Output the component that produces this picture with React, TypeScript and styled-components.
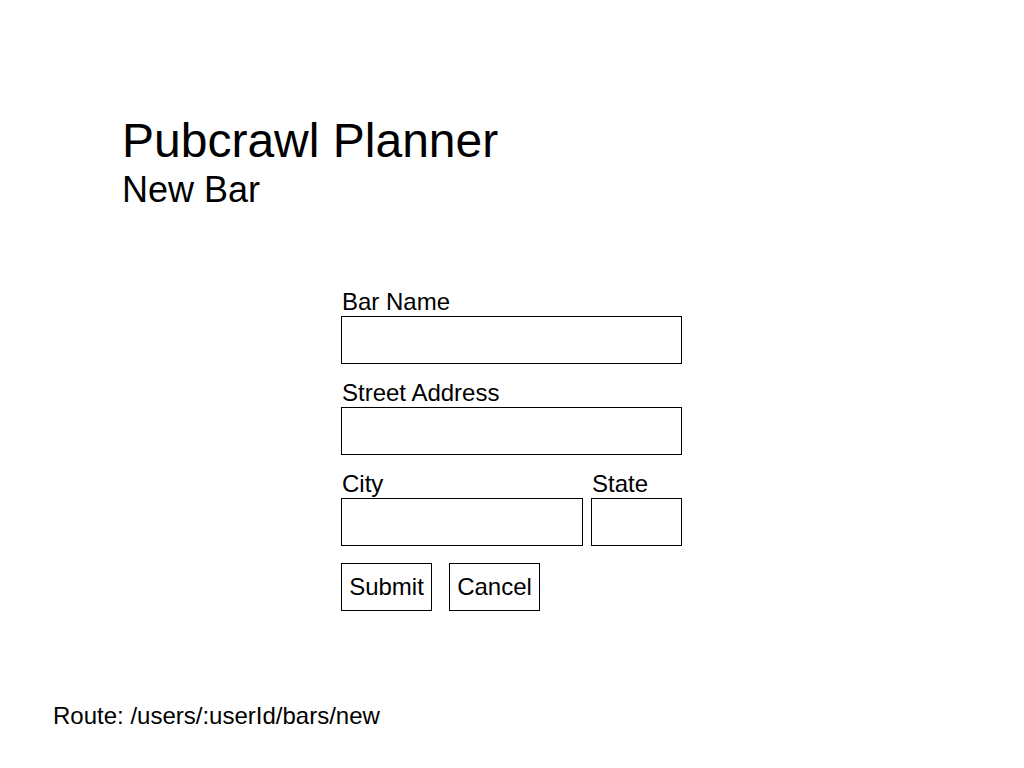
import React from "react";
import styled, { createGlobalStyle } from "styled-components";

const Global = createGlobalStyle`
  html, body { margin: 0; padding: 0; background: #fff; }
  body { font-family: "Liberation Sans", Arial, sans-serif; color: #000; }
  * { box-sizing: border-box; }
`;

const Page = styled.div`
  width: 1024px;
  height: 768px;
  display: flex;
  flex-direction: column;
  position: relative;
`;

const Header = styled.header`
  padding: 117px 0 0 122px;
`;

const Title = styled.h1`
  margin: 0;
  font-size: 48px;
  line-height: 48px;
  font-weight: 400;
`;

const Subtitle = styled.h2`
  margin: 7px 0 0;
  font-size: 36px;
  line-height: 36px;
  font-weight: 400;
`;

const Form = styled.form`
  margin: 82px 0 0 341px;
  width: 341px;
  display: flex;
  flex-direction: column;
  gap: 17px;
`;

const Field = styled.div<{ $w?: number }>`
  display: flex;
  flex-direction: column;
  gap: 2px;
  width: ${(p) => (p.$w ? `${p.$w}px` : "100%")};
`;

const Label = styled.label`
  font-size: 24px;
  line-height: 24px;
  padding-left: 1px;
`;

const Input = styled.input`
  height: 48px;
  width: 100%;
  border: 1px solid #000;
  border-radius: 0;
  background: #fff;
  font: inherit;
  outline: none;
`;

const Row = styled.div<{ $gap: number }>`
  display: flex;
  gap: ${(p) => p.$gap}px;
`;

const Button = styled.button`
  width: 91px;
  height: 48px;
  border: 1px solid #000;
  border-radius: 0;
  background: #fff;
  font-family: "Liberation Sans", Arial, sans-serif;
  font-size: 24px;
  color: #000;
  padding: 0;
`;

const Route = styled.div`
  margin: auto 0 0 53px;
  padding-bottom: 40px;
  font-size: 24px;
  line-height: 24px;
`;

export default function App() {
  return (
    <>
      <Global />
      <Page>
        <Header>
          <Title>Pubcrawl Planner</Title>
          <Subtitle>New Bar</Subtitle>
        </Header>
        <Form onSubmit={(e) => e.preventDefault()}>
          <Field>
            <Label>Bar Name</Label>
            <Input />
          </Field>
          <Field>
            <Label>Street Address</Label>
            <Input />
          </Field>
          <Row $gap={8}>
            <Field $w={242}>
              <Label>City</Label>
              <Input />
            </Field>
            <Field $w={91}>
              <Label>State</Label>
              <Input />
            </Field>
          </Row>
          <Row $gap={17}>
            <Button type="submit">Submit</Button>
            <Button type="button">Cancel</Button>
          </Row>
        </Form>
        <Route>Route: /users/:userId/bars/new</Route>
      </Page>
    </>
  );
}
